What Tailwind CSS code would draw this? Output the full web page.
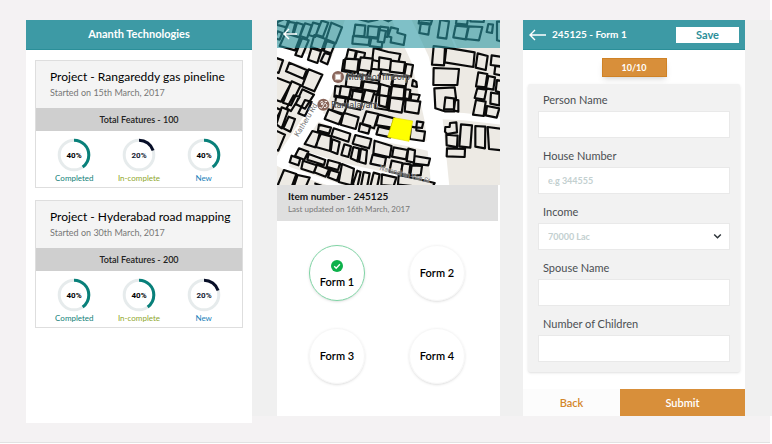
<!DOCTYPE html>
<html lang="en">
<head>
<meta charset="utf-8">
<meta name="viewport" content="width=device-width, initial-scale=1">
<title>Ananth Technologies</title>
<script src="https://cdn.jsdelivr.net/npm/@tailwindcss/browser@4"></script>
</head>
<body class="bg-white font-['Lato','Liberation_Sans',sans-serif] text-black">
<div class="mr-0.5 border-b border-[#e2e2e2] bg-[#f4f2f3] pt-5 pb-[19px] pl-[26px]">
<main class="-mr-0.5 grid grid-cols-[226fr_520fr] items-start">

  <!-- Project list -->
  <section class="min-h-[403px] bg-white">
    <header class="flex h-[30px] items-center justify-center border-b border-[#2b8f99] bg-[#3d9aa5]">
      <h1 class="text-[11px] font-bold text-white">Ananth Technologies</h1>
    </header>
    <div class="flex flex-col gap-3 px-[9px] pt-2.5">
      <article class="border border-[#dedede]">
        <div class="h-[47px] bg-[#f4f4f4] pt-2 pl-3.5">
          <h2 class="text-xs leading-4 whitespace-nowrap">Project - Rangareddy gas pineline</h2>
          <p class="text-[9px] leading-[15px] text-[#777]">Started on 15th March, 2017</p>
        </div>
        <p class="bg-[#cfcfcf] text-center text-[9px] leading-[23px] font-semibold text-[#222]">Total Features - 100</p>
        <ul class="grid h-14 grid-cols-3 px-1.5 pt-[7px] text-center text-[8px] leading-[12px]">
          <li class="flex flex-col items-center text-[#128078]">
            <svg class="size-[34px]" viewBox="0 0 34 34" role="img" aria-label="40%"><circle cx="17" cy="17" r="14.8" fill="none" stroke="#e6ebec" stroke-width="3"/><circle cx="17" cy="17" r="14.8" fill="none" stroke="#08807a" stroke-width="3" pathLength="100" stroke-dasharray="40 100" transform="rotate(-90 17 17)"/><text x="17" y="20" text-anchor="middle" class="fill-black font-['Roboto'] text-[8px] font-bold">40%</text></svg>
            <span>Completed</span></li>
          <li class="flex flex-col items-center text-[#8fa72c]">
            <svg class="size-[34px]" viewBox="0 0 34 34" role="img" aria-label="20%"><circle cx="17" cy="17" r="14.8" fill="none" stroke="#e6ebec" stroke-width="3"/><circle cx="17" cy="17" r="14.8" fill="none" stroke="#080f28" stroke-width="3" pathLength="100" stroke-dasharray="20 100" transform="rotate(-90 17 17)"/><text x="17" y="20" text-anchor="middle" class="fill-[#141c33] font-['Roboto'] text-[8px] font-bold">20%</text></svg>
            <span>In-complete</span></li>
          <li class="flex flex-col items-center text-[#1c7fba]">
            <svg class="size-[34px]" viewBox="0 0 34 34" role="img" aria-label="40%"><circle cx="17" cy="17" r="14.8" fill="none" stroke="#e6ebec" stroke-width="3"/><circle cx="17" cy="17" r="14.8" fill="none" stroke="#08807a" stroke-width="3" pathLength="100" stroke-dasharray="40 100" transform="rotate(-90 17 17)"/><text x="17" y="20" text-anchor="middle" class="fill-black font-['Roboto'] text-[8px] font-bold">40%</text></svg>
            <span>New</span></li>
        </ul>
      </article>
      <article class="border border-[#dedede]">
        <div class="h-[47px] bg-[#f4f4f4] pt-2 pl-3.5">
          <h2 class="text-xs leading-4 whitespace-nowrap">Project - Hyderabad road mapping</h2>
          <p class="text-[9px] leading-[15px] text-[#777]">Started on 30th March, 2017</p>
        </div>
        <p class="bg-[#cfcfcf] text-center text-[9px] leading-[23px] font-semibold text-[#222]">Total Features - 200</p>
        <ul class="grid h-14 grid-cols-3 px-1.5 pt-[7px] text-center text-[8px] leading-[12px]">
          <li class="flex flex-col items-center text-[#128078]">
            <svg class="size-[34px]" viewBox="0 0 34 34" role="img" aria-label="40%"><circle cx="17" cy="17" r="14.8" fill="none" stroke="#e6ebec" stroke-width="3"/><circle cx="17" cy="17" r="14.8" fill="none" stroke="#08807a" stroke-width="3" pathLength="100" stroke-dasharray="40 100" transform="rotate(-90 17 17)"/><text x="17" y="20" text-anchor="middle" class="fill-black font-['Roboto'] text-[8px] font-bold">40%</text></svg>
            <span>Completed</span></li>
          <li class="flex flex-col items-center text-[#8fa72c]">
            <svg class="size-[34px]" viewBox="0 0 34 34" role="img" aria-label="40%"><circle cx="17" cy="17" r="14.8" fill="none" stroke="#e6ebec" stroke-width="3"/><circle cx="17" cy="17" r="14.8" fill="none" stroke="#08807a" stroke-width="3" pathLength="100" stroke-dasharray="40 100" transform="rotate(-90 17 17)"/><text x="17" y="20" text-anchor="middle" class="fill-black font-['Roboto'] text-[8px] font-bold">40%</text></svg>
            <span>In-complete</span></li>
          <li class="flex flex-col items-center text-[#1c7fba]">
            <svg class="size-[34px]" viewBox="0 0 34 34" role="img" aria-label="20%"><circle cx="17" cy="17" r="14.8" fill="none" stroke="#e6ebec" stroke-width="3"/><circle cx="17" cy="17" r="14.8" fill="none" stroke="#080f28" stroke-width="3" pathLength="100" stroke-dasharray="20 100" transform="rotate(-90 17 17)"/><text x="17" y="20" text-anchor="middle" class="fill-[#141c33] font-['Roboto'] text-[8px] font-bold">20%</text></svg>
            <span>New</span></li>
        </ul>
      </article>
    </div>
  </section>

  <div class="grid grid-cols-[223fr_222fr] gap-[23px] bg-[#f0f0f0] pr-[27px] pl-[25px]">

    <!-- Item location and its forms -->
    <section class="bg-white">
      <div class="relative">
        <svg class="block h-[165px] w-full" viewBox="0 0 669 495" preserveAspectRatio="xMidYMid slice" role="img" aria-label="Map">
          <rect width="669" height="495" fill="#edeae4"/>
          <!-- roads -->
          <g fill="none" stroke="#fff">
            <path d="M-10 88L90 122 185 158" stroke-width="38"/>
            <path d="M235 -20L190 110 110 285 10 435" stroke-width="46"/>
            <path d="M100 280L250 338 400 366 480 385" stroke-width="28"/>
            <path d="M365 -20L430 120 470 300 490 500" stroke-width="54"/>
            <path d="M455 285L560 290 680 304" stroke-width="22"/>
            <path d="M30 385L190 435 330 466 480 488" stroke-width="16"/>
            <path d="M-5 425L40 450 190 500" stroke-width="16"/>
            <path d="M500 -10L540 90" stroke-width="6"/>
          </g>
          <!-- buildings -->
          <g fill="#edeae4" stroke="#0a0a0a" stroke-width="6.5" stroke-linejoin="round">
            <path d="M3 5l20-8 14 7-8 18-30-8zM2 34l14 5-8 20-14-4zM25 40l44 13-15 38-46-13zM33 5l22 4-9 35-23-8zM60 8l20 6-13 38-18-7zM84 10l20 6-14 39-21-7zM108 8l20 5-13 38-20-6zM134 2l20 6-16 42-21-6zM163 8l32 14-19 48-29-12zM75 55l20 6-21 50-19-6zM112 45l34 12-13 37-32-10zM104 82l29 9-12 38-28-10zM149 63l25 8-12 29-22-8zM143 99l18 5-10 29-20-9z"/>
            <path d="M-8 112l26 9-13 38-18-6zM37 128l52 22-10 26-52-22zM95 148l41 16-24 50-37-15zM-4 172l46 18-30 55-26-8zM44 184l27 12-29 60-24-8zM76 208l35 16-27 42-28-14zM14 262l20 8-20 55-16-12zM50 226l18 5-26 42-13-8zM84 240l20 6-20 42-20-8zM-6 262l18 8-24 45zM35 290l19 7-14 38-21-10zM-8 330l32 14-20 48-16-8z"/>
            <path d="M240-4l34 9 28-6 0-14-60 0zM235 14l30 3-3 32-32-2zM274 18l32 3-4 32-31-3zM310 20l24 3-3 28-26-2zM228 48l50 5-3 22-49-4zM283 54l34 4-3 25-36-5zM214 88l23 5-6 31-24-6zM240 94l24 5-5 26-25-5zM290 84l44 12 36 6-8 34-76-16zM200 120l38 6-5 34-38-7zM248 125l36 6-5 38-37-7zM275 145l38 5-5 32-39-5zM175 198l43 6-4 32-42-6zM222 208l34 4-5 30-35-5zM262 184l44 8-5 32-45-5zM304 203l39 6-4 32-38-6zM178 227l28 8-5 28-28-7z"/>
            <path d="M308 30l19 3-6 34-19-2zM342 22l21 5-2 11 24 7-5 30-39-8 2-15-10-3zM316-4l18 8 18-10M427-2l38 3-4 13-36-4zM432 7l27 4-5 33-27-5zM490 0l26 4-8 52-26-4zM536 17l39 4-8 37-38-6zM574 19l42 2-10 40-40-4zM580-8l42 2-2 12-40-2zM634 12l14 2-3 25-16-3zM660 5l14 0v60l-14-4zM539-6l34 2-3 18-33-3z"/>
            <path d="M470 78l34 4-3 54-36-2zM508 83l85 14-4 44-86-14zM602 100l30 8-6 42-30-7zM644 106l30 5v28l-33-4zM470 144l76 3-5 48-72 0zM472 205l61-3 4 32-4 40-30 0-28-9zM604 157l27 5-6 40-28-3zM634 168l20 4-5 37-22-4zM655 138l20 3v26l-23-5zM660 180l14 3v36l-18-6zM601 205l27 4-6 30-29-5zM642 218l25 4v34l-27-5z"/>
            <path d="M205 116l40 2-4 38-40-6zM251 112l36 4-5 38-37-5zM307 112l35 6-3 34-34-5zM342 122l42 5-4 33-42-5zM388 132l20 3-6 35-20-5zM408 180l10 6 2 15-15-3zM210 166l46 4-5 35-45-5zM260 184l48 7-5 24-47-7zM310 161l40 5-5 36-40-7zM348 166l44 5-6 28-43-5z"/>
            <path d="M192 198l30 4-6 31-29-5zM228 212l30 5-5 29-30-6zM265 210l27 6-10 35-26-7zM310 192l28 8-10 62-22-6 1-33zM345 198l41 5-3 33-43-4zM340 233l40 6-6 39-39-7zM382 206l18 4-4 28-16-5zM403 222l25 3-6 18-21-3zM386 240l44 5-6 36-41-7zM299 224l38 6-5 40-38-6zM505 232l30 4-4 32-30 0zM531 238l13 3 0 34-13-4zM597 240l29 5-6 43-32-4zM630 258l37 7-8 28-33-7z"/>
            <path d="M155 268l42 17-12 28-42-16zM200 278l45 14-9 35-45-13zM175 248l34 10-8 24-36-11zM214 236l42 8-6 25-41-8zM268 274l36 8-13 43-36-12zM305 283l47 12-8 28-47-8zM305 320l42 10-7 22-42-9zM250 310l30 8-6 23-29-8z"/>
            <path d="M126 314l36 9-6 18-33-9zM170 325l50 16-6 24-51-17zM106 333l26 7-18 42-31-10zM128 340l34 9-3 44-42-12zM166 358l22 8-7 36-20-8zM202 373l20 6-8 32-21-6zM235 345l48 12-7 28-49-14zM229 381l18 5-6 38-20-9zM252 386l18 5-4 40-20-6zM293 362l51 16-6 34-49-11zM287 404l40 9-5 27-42-9z"/>
            <path d="M66 385l28 10-12 24-28-11zM95 402l50 18-4 15-50-16zM44 407l26 9-6 20-26-9zM78 422l41 14-9 22-37-12zM120 434l36 14-10 22-35-13zM154 420l35 10-6 20-34-10zM160 450l28 8-8 24-27-10zM195 432l36 14-8 50-38-10zM21 450l37 12-18 50-38-16zM62 465l36 8-13 30-34-5zM112 490l35 12M241 452l10 4-10 45-14-6zM260 456l18 4-8 42-18-4zM290 458l18 5-8 40-20-4zM315 463l43 10-8 25-37-3z"/>
            <path d="M350 382l42 8-5 28-42-8zM394 386l20 5-3 37-22-5zM413 408l46 8-5 20-44-5zM344 422l32 7-3 34-36-8zM378 430l22 3-4 34-26-6zM404 436l31 2-4 28-31-1zM365 465l50 10 58 14-8 15-102-10z"/>
            <path d="M420 304l19 3-4 17-17-2zM402 320l16 3v8l26 4-4 28-42-6zM505 321l13 0 1-12 19-2 2 30-30 5-6-7zM508 344l34 3-2 34-31-5zM552 313l33 3-5 67-33-4zM595 318l30 2-1 65-29-5zM632 321l44 6v64l-40-4zM510 385l54 2-1 24-54-2z"/>
            <path fill="#ffff00" stroke="#e6e000" stroke-width="2" d="M350 293l57 10-11 61-64-13z"/>
          </g>
          <!-- labels -->
          <g font-family="Roboto, sans-serif" paint-order="stroke" stroke="#fff" stroke-opacity=".4" stroke-width="3">
            <text transform="translate(64 352) rotate(-59)" font-size="23" fill="#777">Katheru Rd</text>
            <text transform="translate(307 449) rotate(15)" font-size="20" fill="#777">Narendran Van St</text>
            <text x="207" y="180" font-size="27" fill="#3c3c40">Muthoot fincorp</text>
            <text x="162" y="263" font-size="27" fill="#3c3c40">Ramalayam</text>
          </g>
          <circle cx="183" cy="171" r="18" fill="#886459"/><rect x="175" y="163" width="16" height="16" fill="#fff" stroke="#d3c2bc" stroke-width="3"/>
          <circle cx="139" cy="254" r="18" fill="#886459"/><path d="M130 247q7-6 8 0t-6 5q10 0 6 8t-11 2M140 254q5-8 9 0t-8 9M143 244q4 4 8-1" fill="none" stroke="#fff" stroke-width="3"/>
        </svg>
        <div class="absolute inset-x-0 top-0 flex h-7 items-center bg-[#2a96a1]/60 pl-1.5">
          <a href="#" aria-label="Back to projects">
            <svg class="h-3 w-[18px]" viewBox="0 0 18 12" fill="none" stroke="#fff" stroke-width="1.4"><path d="M6 1L1 6l5 5M1 6h13"/></svg>
          </a>
        </div>
      </div>
      <div class="mr-0.5 h-9 bg-[#dfdfdf] pt-1 pl-[11px]">
        <h2 class="text-[10px] leading-[15px] font-bold text-[#111]">Item number - 245125</h2>
        <p class="text-[8px] leading-[11px] text-[#777]">Last updated on 16th March, 2017</p>
      </div>
      <div class="mr-[13px] ml-2.5 grid grid-cols-2 justify-items-center gap-y-[27px] pt-6">
        <button class="flex size-14 flex-col items-center justify-center gap-0.5 rounded-full border border-[#7fd3a4] pt-1 text-[11px] leading-4 font-semibold shadow-sm">
          <svg class="size-3" viewBox="0 0 12 12"><circle cx="6" cy="6" r="6" fill="#0db14b"/><path d="M3.2 6.2l2 2 3.7-4" fill="none" stroke="#fff" stroke-width="1.3"/></svg>
          Form 1</button>
        <button class="size-14 rounded-full border border-[#f6f6f6] text-[11px] font-semibold shadow-sm">Form 2</button>
        <button class="size-14 rounded-full border border-[#f6f6f6] text-[11px] font-semibold shadow-sm">Form 3</button>
        <button class="size-14 rounded-full border border-[#f6f6f6] text-[11px] font-semibold shadow-sm">Form 4</button>
      </div>
    </section>

    <!-- Form entry -->
    <form class="bg-white">
      <header class="flex h-[30px] items-center border-b border-[#2b8f99] bg-[#3d9aa5] px-1.5">
        <a href="#" aria-label="Back to item"><svg class="block h-3 w-[17px]" viewBox="0 0 17 12" fill="none" stroke="#fff" stroke-width="1.4"><path d="M6 1L1 6l5 5M1 6h16"/></svg></a>
        <h2 class="ml-1.5 text-[10px] font-bold text-white">245125 - Form 1</h2>
        <button type="button" class="ml-auto h-4 w-[63px] bg-white text-[11px] leading-4 font-bold text-[#2b8f99]">Save</button>
      </header>
      <p class="mx-auto mt-2 h-[19px] w-[65px] border border-[#cf8226] bg-[#d88f3a] text-center text-[9px] leading-[17px] font-bold text-white shadow-md">10/10</p>
      <div class="mx-[5px] mt-[7px] flex flex-col gap-2.5 rounded-xs bg-[#f2f2f2] px-2.5 pt-2 pb-2.5 text-[11px] text-[#4b4f52] shadow">
        <label class="block"><span class="block pl-[5px] leading-4">Person Name</span><input class="mt-[3px] block h-[27px] w-full border border-[#e9e9e9] bg-white px-2.5 text-[10px]"></label>
        <label class="block"><span class="block pl-[5px] leading-4">House Number</span><input placeholder="e.g 344555" class="mt-[3px] block h-[27px] w-full border border-[#e9e9e9] bg-white px-[9px] text-[9px] font-bold placeholder:text-[#c3d0d0]"></label>
        <label class="relative block"><span class="block pl-[5px] leading-4">Income</span><select class="mt-[3px] block h-[27px] w-full appearance-none border border-[#e9e9e9] bg-white px-[9px] text-[9px] font-bold text-[#c3d0d0]"><option>70000 Lac</option></select>
          <svg class="pointer-events-none absolute right-2 bottom-2.5 h-[7px] w-[9px]" viewBox="0 0 9 7" fill="none" stroke="#2c3338" stroke-width="1.5"><path d="M1.2 1.5l3.3 3.3 3.3-3.3"/></svg></label>
        <label class="block"><span class="block pl-[5px] leading-4">Spouse Name</span><input class="mt-[3px] block h-[27px] w-full border border-[#e9e9e9] bg-white px-2.5 text-[10px]"></label>
        <label class="block"><span class="block pl-[5px] leading-4">Number of Children</span><input class="mt-[3px] block h-[27px] w-full border border-[#e9e9e9] bg-white px-2.5 text-[10px]"></label>
      </div>
      <div class="mt-[17px] grid grid-cols-[97fr_125fr] text-[11px] leading-[27px] font-semibold">
        <button type="button" class="bg-[#fcfcfc] text-[#d3862b]">Back</button>
        <button class="bg-[#d88f3a] text-white">Submit</button>
      </div>
    </form>
  </div>
</main>
</div>
</body>
</html>
